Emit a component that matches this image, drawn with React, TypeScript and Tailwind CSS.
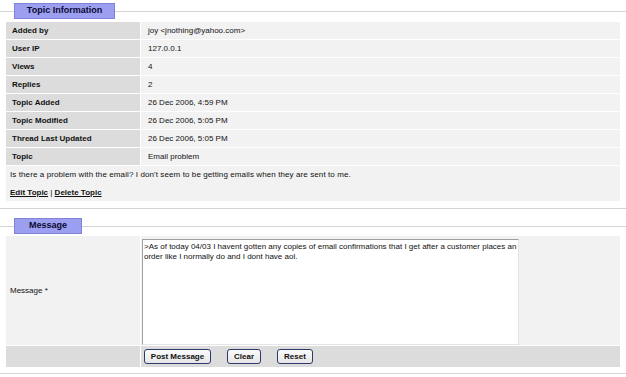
import React from "react";

const rows: [string, string][] = [
  ["Added by", "joy <jnothing@yahoo.com>"],
  ["User IP", "127.0.0.1"],
  ["Views", "4"],
  ["Replies", "2"],
  ["Topic Added", "26 Dec 2006, 4:59 PM"],
  ["Topic Modified", "26 Dec 2006, 5:05 PM"],
  ["Thread Last Updated", "26 Dec 2006, 5:05 PM"],
  ["Topic", "Email problem"],
];

function Header({ title, w }: { title: string; w: string }) {
  return (
    <div className="flex items-center h-[16px]">
      <div className="w-[14px] h-px bg-[#d4d4d4]" />
      <div
        className={`${w} h-[16px] flex items-center justify-center bg-[#9c9ef0] border border-[#7f82d6] font-bold text-[#0a0a30] text-[9px]`}
      >
        {title}
      </div>
      <div className="flex-1 h-px bg-[#d4d4d4]" />
    </div>
  );
}

function Btn({ label, w }: { label: string; w: string }) {
  return (
    <button
      className={`${w} h-[15px] rounded-[3px] border border-[#2b3a67] bg-gradient-to-b from-[#fbfbfb] to-[#e6e6e6] text-[8px] font-bold text-[#111] leading-none flex items-center justify-center`}
    >
      {label}
    </button>
  );
}

export default function App() {
  return (
    <div className="w-[626px] h-[377px] bg-white font-['Liberation_Sans',Arial,sans-serif] text-[8px] text-[#111] overflow-hidden">
      <div className="pt-[3px]">
        <Header title="Topic Information" w="w-[101px]" />
      </div>
      <div className="mx-[6px] mt-[3px] flex flex-col gap-px">
        {rows.map(([k, v]) => (
          <div key={k} className="grid grid-cols-[134px_1fr] gap-px h-[17px]">
            <div className="bg-[#dcdcdc] font-bold pl-[6px] flex items-center">{k}</div>
            <div className="bg-[#f2f2f2] pl-[7px] flex items-center">{v}</div>
          </div>
        ))}
        <div className="bg-[#f2f2f2] h-[35px] pl-[4px] flex flex-col justify-center gap-[6px]">
          <div className="tracking-[0.1px]">Is there a problem with the email? I don't seem to be getting emails when they are sent to me.</div>
          <div>
            <a className="font-bold underline">Edit Topic</a> | <a className="font-bold underline">Delete Topic</a>
          </div>
        </div>
      </div>
      <div className="mt-[7px] h-px bg-[#d4d4d4]" />
      <div className="pt-[9px]">
        <Header title="Message" w="w-[68px]" />
      </div>
      <div className="mx-[6px] mt-[2px] flex flex-col gap-px">
        <div className="grid grid-cols-[134px_1fr] gap-px h-[109px]">
          <div className="bg-[#f2f2f2] pl-[4px] flex items-center">Message *</div>
          <div className="bg-[#f2f2f2] pl-[1px] pt-[3px]">
            <div className="w-[377px] h-[106px] bg-white border border-t-[#a0a0a0] border-l-[#a0a0a0] border-r-[#e4e4e4] border-b-[#e4e4e4] px-[1px] pt-[2px] leading-[10px] whitespace-nowrap overflow-hidden">
              &gt;As of today 04/03 I havent gotten any copies of email confirmations that I get after a customer places an
              <br />
              order like I normally do and I dont have aol.
            </div>
          </div>
        </div>
        <div className="grid grid-cols-[134px_1fr] gap-px h-[21px]">
          <div className="bg-[#dcdcdc]" />
          <div className="bg-[#dcdcdc] flex items-center gap-[16px] pl-[3px]">
            <Btn label="Post Message" w="w-[67px]" />
            <Btn label="Clear" w="w-[34px]" />
            <Btn label="Reset" w="w-[36px]" />
          </div>
        </div>
      </div>
      <div className="mt-[6px] h-px bg-[#d4d4d4]" />
    </div>
  );
}
